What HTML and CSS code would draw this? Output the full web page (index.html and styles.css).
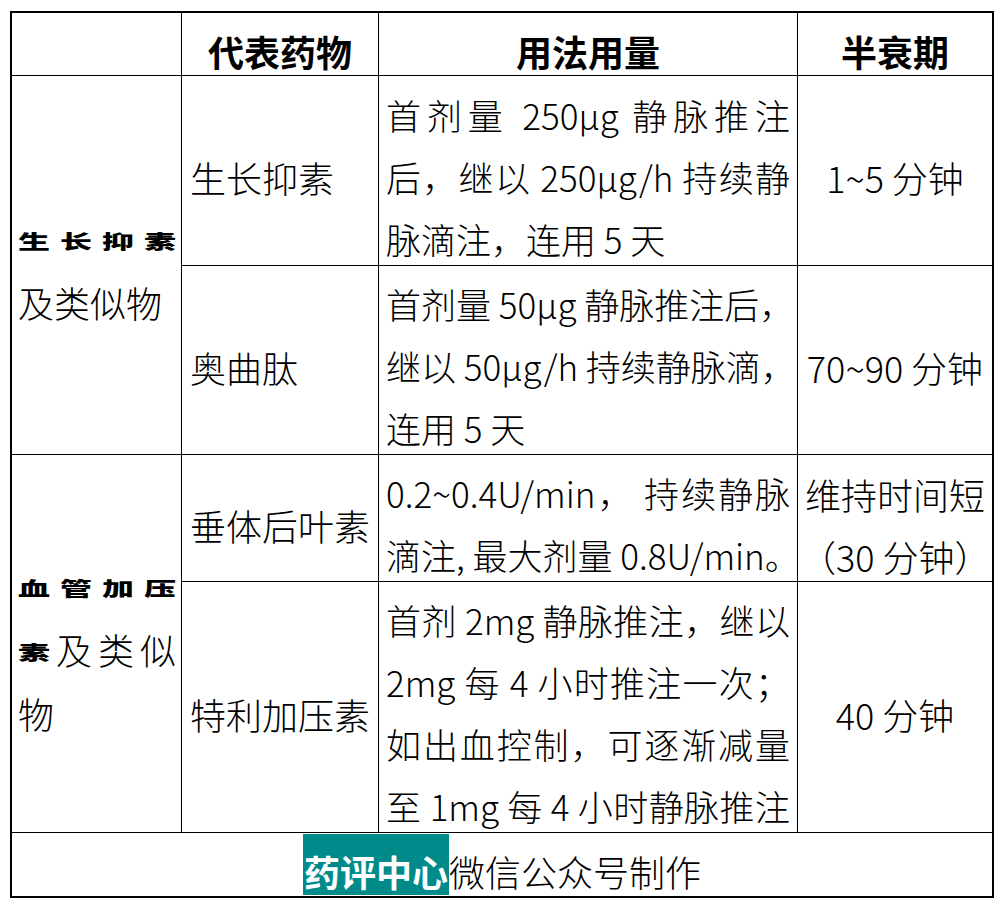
FILE: index.html
```html
<!DOCTYPE html>
<html lang="zh-CN">
<head>
<meta charset="utf-8">
<title>药物表</title>
<link rel="stylesheet" href="styles.css">
</head>
<body>
<div class="sheet">
  <div class="cell head"></div>
  <div class="cell head c2">代表药物</div>
  <div class="cell head c3">用法用量</div>
  <div class="cell head c4">半衰期</div>

  <div class="cell c1 span2">
    <span class="ln j hbline">生长抑素</span>
    <span class="ln">及类似物</span>
  </div>
  <div class="cell c2">生长抑素</div>
  <div class="cell c3">
    <span class="ln j">首剂量 250μg 静脉推注</span>
    <span class="ln j">后，继以 250μg/h 持续静</span>
    <span class="ln">脉滴注，连用 5 天</span>
  </div>
  <div class="cell c4">1~5 分钟</div>

  <div class="cell c2">奥曲肽</div>
  <div class="cell c3">
    <span class="ln j">首剂量 50μg 静脉推注后，</span>
    <span class="ln j">继以 50μg/h 持续静脉滴，</span>
    <span class="ln">连用 5 天</span>
  </div>
  <div class="cell c4">70~90 分钟</div>

  <div class="cell c1 span2">
    <span class="ln j hbline">血管加压</span>
    <span class="ln j"><span class="hb">素</span>及类似</span>
    <span class="ln">物</span>
  </div>
  <div class="cell c2">垂体后叶素</div>
  <div class="cell c3">
    <span class="ln j">0.2~0.4U/min， 持续静脉</span>
    <span class="ln j">滴注, 最大剂量 0.8U/min。</span>
  </div>
  <div class="cell c4">
    <span class="ln">维持时间短</span>
    <span class="ln">（30 分钟）</span>
  </div>

  <div class="cell c2">特利加压素</div>
  <div class="cell c3">
    <span class="ln j">首剂 2mg 静脉推注，继以</span>
    <span class="ln j">2mg 每 4 小时推注一次；</span>
    <span class="ln j">如出血控制，可逐渐减量</span>
    <span class="ln j">至 1mg 每 4 小时静脉推注</span>
  </div>
  <div class="cell c4">40 分钟</div>

  <div class="cell foot">
    <span class="brand">药评中心</span><span class="rest">微信公众号制作</span>
  </div>
</div>
</body>
</html>
```

FILE: styles.css
```css
html, body {
  margin: 0;
  padding: 0;
  background: #fff;
}

body {
  font-family: "Noto Sans CJK SC", "Liberation Sans", sans-serif;
  font-size: 36px;
  font-weight: 300;
  color: #000;
}

.sheet {
  display: grid;
  grid-template-columns: 169px 196px 418px 194px;
  grid-template-rows: 62px 189px 188px 126px 250px 63px;
  gap: 1px;
  width: max-content;
  margin: 11px 0 0 10px;
  background: #000;
  border: 2px solid #000;
}

.cell {
  background: #fff;
  box-sizing: border-box;
  min-height: 0;
  min-width: 0;
  display: flex;
  flex-direction: column;
  justify-content: center;
  padding-top: 13px;
  line-height: 62px;
  white-space: nowrap;
}

.head {
  font-weight: 700;
  padding-top: 14px;
  text-align: center;
}

.span2 {
  grid-row: span 2;
}

.c1 {
  padding-left: 6px;
  padding-right: 5px;
  padding-top: 12px;
}

.c2 {
  padding-left: 8px;
}

.head.c2,
.head.c3,
.head.c4 {
  padding-left: 0;
  padding-right: 0;
  text-align: center;
}

.c3 {
  padding-left: 7px;
  padding-right: 7px;
  padding-top: 12px;
  font-size: 35px;
}

.head.c3 {
  font-size: 36px;
  padding-top: 14px;
}

.c4 {
  text-align: center;
  padding-left: 2px;
  padding-right: 2px;
}

.ln {
  display: block;
  line-height: 62px;
  white-space: nowrap;
}

.j {
  text-align: justify;
  text-align-last: justify;
}

.hbline {
  font-weight: 900;
  font-size: 32px;
  transform: scaleY(0.62);
}

.hb {
  display: inline-block;
  font-weight: 900;
  font-size: 32px;
  transform: scaleY(0.62);
}

.foot {
  grid-column: 1 / -1;
  flex-direction: row;
  justify-content: center;
  align-items: flex-start;
  padding-top: 1px;
}

.brand {
  display: block;
  background: #008b8a;
  color: #fff;
  font-weight: 700;
  padding: 14px 1px 0 1px;
  line-height: 47px;
}

.rest {
  display: block;
  padding-top: 14px;
  line-height: 47px;
}
```
